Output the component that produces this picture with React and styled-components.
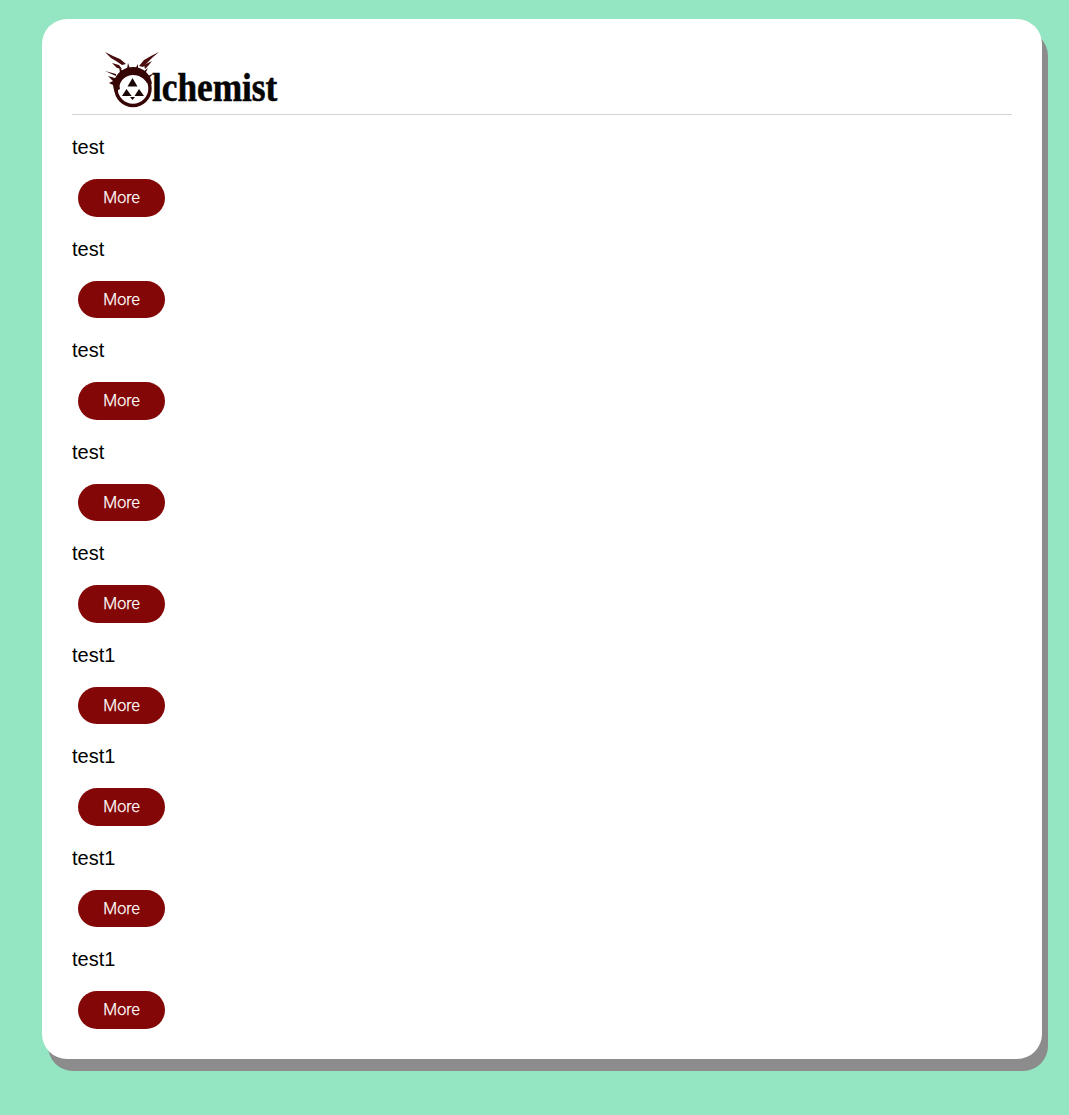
import styled, { createGlobalStyle } from "styled-components";

const GlobalStyle = createGlobalStyle`
  html, body {
    margin: 0;
    padding: 0;
    background: #93e6c1;
    font-family: "Liberation Sans", Arial, sans-serif;
  }
`;

const Page = styled.div`
  padding: 19px 27px 44px 42px;
`;

const Card = styled.main`
  width: 940px;
  height: 1040px;
  padding: 0 30px;
  background: #fff;
  border-radius: 25px;
  box-shadow: 6px 12px 0 #8c8c8c;
`;

const Header = styled.header`
  display: flex;
  align-items: flex-start;
  height: 95px;
  padding-left: 33px;
  border-bottom: 1px solid #d3d3d3;
`;

const Logo = styled.div`
  display: flex;
  align-items: flex-start;
  margin-top: 33px;
`;

const LogoMark = styled.svg`
  display: block;
  width: 55px;
  height: 56px;
  flex: none;
`;

// condensed and thickened to get near the blackletter wordmark
const LogoText = styled.span`
  margin: 15px 0 0 -8px;
  color: #050505;
  font-family: "Liberation Serif", "Times New Roman", serif;
  font-size: 41px;
  font-weight: 700;
  line-height: 41px;
  -webkit-text-stroke: 0.6px #050505;
  transform: scaleX(0.86);
  transform-origin: left top;
`;

const List = styled.section`
  display: flex;
  flex-direction: column;
  padding-top: 21px;
`;

const Item = styled.article`
  height: 101.5px;
`;

const Title = styled.p`
  margin: 0;
  color: #000;
  font-size: 20px;
  line-height: 23px;
`;

const MoreButton = styled.button`
  display: block;
  width: 87px;
  height: 37.5px;
  margin: 20px 0 0 6px;
  padding: 0;
  border: 0;
  border-radius: 19px;
  background: #840707;
  color: #fff;
  font-family: Roboto, sans-serif;
  font-size: 16px;
  font-weight: 300;
  -webkit-text-stroke: 0.25px #fff;
  cursor: pointer;
`;

const items = ["test", "test", "test", "test", "test", "test1", "test1", "test1", "test1"];

function AlchemistMark() {
  return (
    <LogoMark viewBox="0 0 55 56" aria-hidden="true">
      {/* horns */}
      <path d="M0 0 L8 4 L15 7 L21 12 L17 13 L11 9 L6 6 Z" fill="#4a0c0c" />
      <path d="M54 0 L46 4 L39 8 L34 14 L38 15 L44 9 L48 5 Z" fill="#4a0c0c" />
      <path d="M7 11 L14 13 L17 17 L12 16 Z M47 9 L43 14 L40 17 L39 13 Z" fill="#4a0c0c" />
      {/* ouroboros ring, thin below and heavy over the top */}
      <circle cx="28" cy="36.5" r="17" fill="none" stroke="#360404" strokeWidth="3.4" />
      <path d="M9 38 C6 26 16 15 28 15 C39 15 46 23 47 32 L42 31 C39 26 34 23 28 23 C21 23 15 28 14 36 L11 43 Z" fill="#360404" />
      {/* head and back spikes */}
      <path d="M3 24 L13 27 L15 37 L11 39 L8 33 L4 31 L8 29 Z" fill="#360404" />
      <path d="M0 19 L11 22 L11 24 Z M14 14 L18 20 L15 21 Z M23 11 L25 17 L22 17 Z M33 12 L33 18 L30 17 Z M43 16 L40 22 L38 20 Z M49 21 L44 26 L43 24 Z" fill="#360404" />
      {/* star */}
      <path d="M27.5 26 L32.5 34.5 L22.5 34.5 Z M21.5 37 L26.7 44 L17 44 Z M34 37 L39 44 L29.5 44 Z M25 45 L30 45 L27.5 48 Z" fill="#1b0606" />
    </LogoMark>
  );
}

export default function App() {
  return (
    <>
      <GlobalStyle />
      <Page>
        <Card>
          <Header>
            <Logo>
              <AlchemistMark />
              <LogoText>lchemist</LogoText>
            </Logo>
          </Header>
          <List>
            {items.map((title, i) => (
              <Item key={i}>
                <Title>{title}</Title>
                <MoreButton type="button">More</MoreButton>
              </Item>
            ))}
          </List>
        </Card>
      </Page>
    </>
  );
}
